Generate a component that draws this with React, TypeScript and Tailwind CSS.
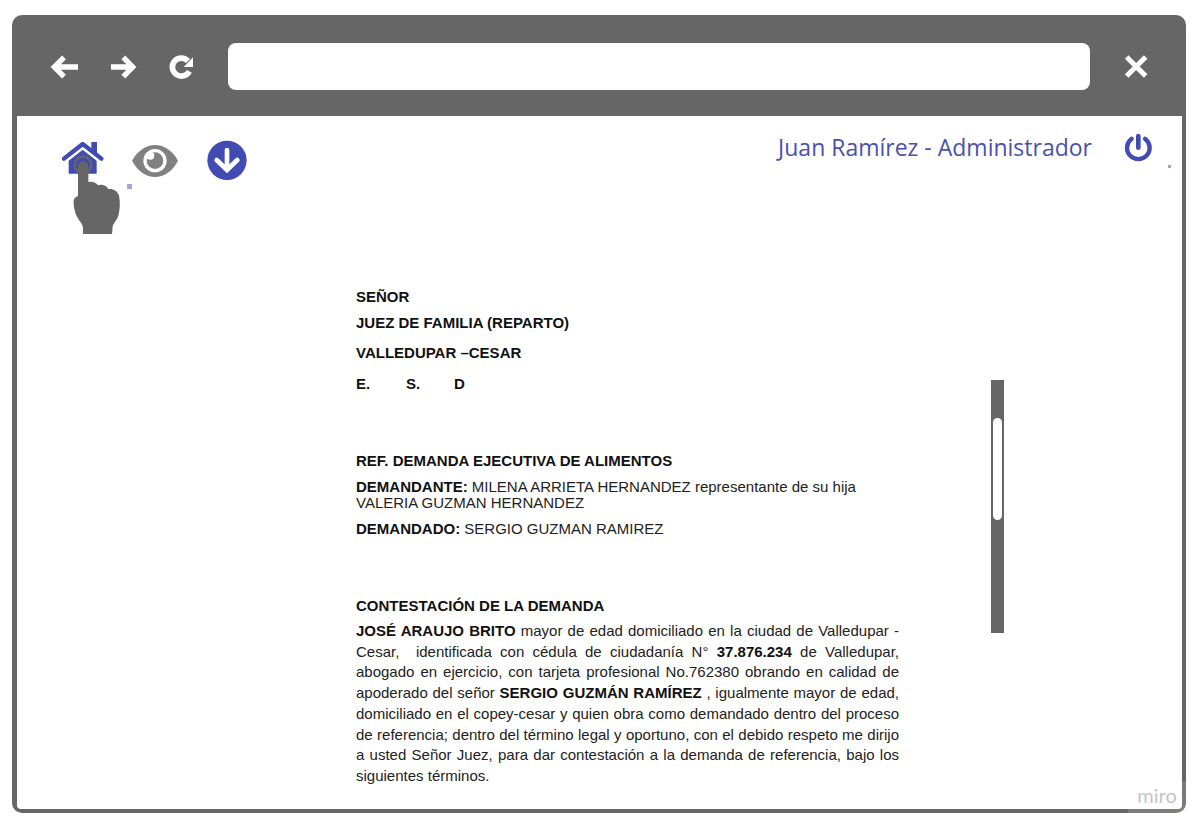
import type { ReactNode } from "react";

function BackIcon() {
  return (
    <svg viewBox="150 165 90 72" className="h-6 w-[30px]" aria-hidden="true">
      <path d="M234 201H164M192 172L163 201L192 230" fill="none" stroke="#fff" strokeWidth="16" />
    </svg>
  );
}

function ForwardIcon() {
  return (
    <svg viewBox="330 165 90 72" className="h-6 w-[30px]" aria-hidden="true">
      <path d="M333 201H397M370 172L398 201L370 230" fill="none" stroke="#fff" strokeWidth="16" />
    </svg>
  );
}

function ReloadIcon() {
  return (
    <svg viewBox="504 162 78 78" className="size-[26px]" aria-hidden="true">
      <path d="M568 214A27 27 0 1 1 564 183" fill="none" stroke="#fff" strokeWidth="17" />
      <path d="M579 172V201H551Z" fill="#fff" />
    </svg>
  );
}

function CloseIcon() {
  return (
    <svg viewBox="192 164 72 72" className="size-6" aria-hidden="true">
      <path d="M200 170L257 227M257 170L200 227" fill="none" stroke="#fff" strokeWidth="15" />
    </svg>
  );
}

function HomeIcon() {
  return (
    <svg viewBox="66 64 126 120" className="h-10 w-[42px]" aria-hidden="true">
      <path d="M128 84L170 117V162H86V117Z" fill="#414bb2" />
      <path d="M70 123L128 78L186 123" fill="none" stroke="#fff" strokeWidth="20" />
      <path d="M154 67H171V102L154 88Z" fill="#414bb2" />
      <path
        d="M72 117L128 73L184 117"
        fill="none"
        stroke="#414bb2"
        strokeWidth="13"
        strokeLinecap="round"
        strokeLinejoin="round"
      />
    </svg>
  );
}

function HandIcon() {
  return (
    <svg viewBox="99 105 144 240" className="h-20 w-12" aria-hidden="true">
      <path
        d="M114 139A15 15 0 0 1 145 139V186C158 184 168 188 174 196C186 192 198 196 205 207C220 205 231 212 237 226C241 247 240 268 235 287C231 301 219 309 218 320L216 342H129V324C128 309 114 301 107 281C102 266 100 252 101 241C103 234 107 231 114 228Z"
        fill="#666"
      />
      <circle cx="129" cy="135" r="25" fill="none" stroke="#666" strokeWidth="7" />
    </svg>
  );
}

function EyeIcon() {
  return (
    <svg viewBox="273 72 144 102" className="h-[34px] w-12" aria-hidden="true">
      <path d="M276 122C294 91 319 75 345 75S397 91 414 122C397 155 371 171 345 171S294 155 276 122Z" fill="#808080" />
      <circle cx="345" cy="122" r="35" fill="#fff" />
      <circle cx="345" cy="122" r="25" fill="#808080" />
      <circle cx="331" cy="107" r="12" fill="#fff" />
    </svg>
  );
}

function DownIcon() {
  return (
    <svg viewBox="498 60 126 123" className="h-[41px] w-[42px]" aria-hidden="true">
      <circle cx="561" cy="121" r="59" fill="#414bb2" />
      <path
        d="M561 90V148M530 120L561 150L592 120"
        fill="none"
        stroke="#fff"
        strokeWidth="14"
        strokeLinecap="round"
        strokeLinejoin="miter"
      />
    </svg>
  );
}

function PowerIcon() {
  return (
    <svg viewBox="192 400 87 87" className="size-[29px]" aria-hidden="true">
      <g fill="none" stroke="#414bb2" strokeLinecap="round">
        <path d="M215 417A34 34 0 1 0 255 417" strokeWidth="13" />
        <path d="M235 409V444" strokeWidth="14" />
      </g>
    </svg>
  );
}

function Line({ children }: { children: ReactNode }) {
  return <span className="block whitespace-pre [text-align-last:justify]">{children}</span>;
}

function BrowserBar() {
  return (
    <header className="flex h-[101px] items-center px-[38px] pt-0.5">
      <nav className="flex items-center" aria-label="Navegación">
        <button type="button" aria-label="Atrás" className="mr-[30px]">
          <BackIcon />
        </button>
        <button type="button" aria-label="Adelante" className="mr-7">
          <ForwardIcon />
        </button>
        <button type="button" aria-label="Recargar" className="mr-[34px]">
          <ReloadIcon />
        </button>
      </nav>
      <input
        type="text"
        aria-label="Dirección"
        className="h-[47px] min-w-0 flex-1 rounded-lg bg-white px-4 outline-none"
      />
      <button type="button" aria-label="Cerrar" className="ml-[34px]">
        <CloseIcon />
      </button>
    </header>
  );
}

function Toolbar() {
  return (
    <div className="flex items-start justify-between pt-[17px] pr-[29px] pl-[45px]">
      <div className="mt-[7px] flex items-center gap-[27px]">
        <div className="relative">
          <button type="button" aria-label="Inicio" className="block">
            <HomeIcon />
          </button>
          <span className="pointer-events-none absolute top-[14px] left-[11px] w-12">
            <HandIcon />
          </span>
          <span className="absolute top-[43px] left-[65px] size-[5px] bg-[#a3a6d8]" />
        </div>
        <button type="button" aria-label="Ver">
          <EyeIcon />
        </button>
        <button type="button" aria-label="Descargar">
          <DownIcon />
        </button>
      </div>
      <div className="flex items-center gap-8">
        <p className="font-['Open_Sans','Noto_Sans',sans-serif] text-[23px] leading-[29px] text-[#4a51ab]">
          Juan Ramírez - Administrador
        </p>
        <div className="relative">
          <button type="button" aria-label="Cerrar sesión" className="block">
            <PowerIcon />
          </button>
          <span className="absolute top-8 left-11 size-[3px] bg-[#9da0d6]" />
        </div>
      </div>
    </div>
  );
}

function Letter() {
  return (
    <article className="w-[543px] shrink-0 font-['Liberation_Sans',Arial,sans-serif] text-[15px] leading-4 text-[#222]">
      <div className="font-bold text-[#111]">
        <p>SEÑOR</p>
        <p className="mt-2.5">JUEZ DE FAMILIA (REPARTO)</p>
        <p className="mt-3.5">VALLEDUPAR –CESAR</p>
        <p className="mt-[15px] flex">
          <span className="w-[50px]">E.</span>
          <span className="w-12">S.</span>
          <span>D</span>
        </p>
        <h2 className="mt-[61px]">REF. DEMANDA EJECUTIVA DE ALIMENTOS</h2>
      </div>
      <p className="mt-2.5">
        <b className="text-[#111]">DEMANDANTE:</b> MILENA ARRIETA HERNANDEZ representante de su hija
        <br />
        VALERIA GUZMAN HERNANDEZ
      </p>
      <p className="mt-2.5">
        <b className="text-[#111]">DEMANDADO:</b> SERGIO GUZMAN RAMIREZ
      </p>
      <h2 className="mt-[61px] font-bold text-[#111]">CONTESTACIÓN DE LA DEMANDA</h2>
      <p className="mt-[7px] flex h-[165px] flex-col justify-between leading-5">
        <Line>
          <b className="text-[#111]">JOSÉ ARAUJO BRITO</b> mayor de edad domiciliado en la ciudad de Valledupar -
        </Line>
        <Line>
          Cesar,{"  "}identificada con cédula de ciudadanía N° <b className="text-[#111]">37.876.234</b> de Valledupar,
        </Line>
        <Line>abogado en ejercicio, con tarjeta profesional No.762380 obrando en calidad de</Line>
        <Line>
          apoderado del señor <b className="text-[#111]">SERGIO GUZMÁN RAMÍREZ</b> , igualmente mayor de edad,
        </Line>
        <Line>domiciliado en el copey-cesar y quien obra como demandado dentro del proceso</Line>
        <Line>de referencia; dentro del término legal y oportuno, con el debido respeto me dirijo</Line>
        <Line>a usted Señor Juez, para dar contestación a la demanda de referencia, bajo los</Line>
        <span className="block">siguientes términos.</span>
      </p>
    </article>
  );
}

export default function App() {
  return (
    <div className="min-h-screen bg-white pt-[15px] pr-[17px] pb-[17px] pl-3">
      <div className="relative rounded-[10px] bg-[#666]">
        <BrowserBar />
        <div className="pr-1 pb-1 pl-[5px]">
          <main className="rounded-b-[4px] bg-white pb-[23px]">
            <Toolbar />
            <div className="flex justify-center pt-[108px] pl-[161px]">
              <Letter />
              <div className="mt-[91px] ml-[92px] h-[253px] w-[13px] bg-[#666] px-0.5 pt-[38px]">
                <div className="h-[102px] rounded-full bg-white" />
              </div>
            </div>
          </main>
        </div>
        <div className="absolute right-0 bottom-0 flex h-8 w-[58px] justify-center rounded-br-[10px] bg-white/15 font-[Lato,sans-serif] text-xl leading-7 text-[#c3c3cb]">
          miro
        </div>
      </div>
    </div>
  );
}
